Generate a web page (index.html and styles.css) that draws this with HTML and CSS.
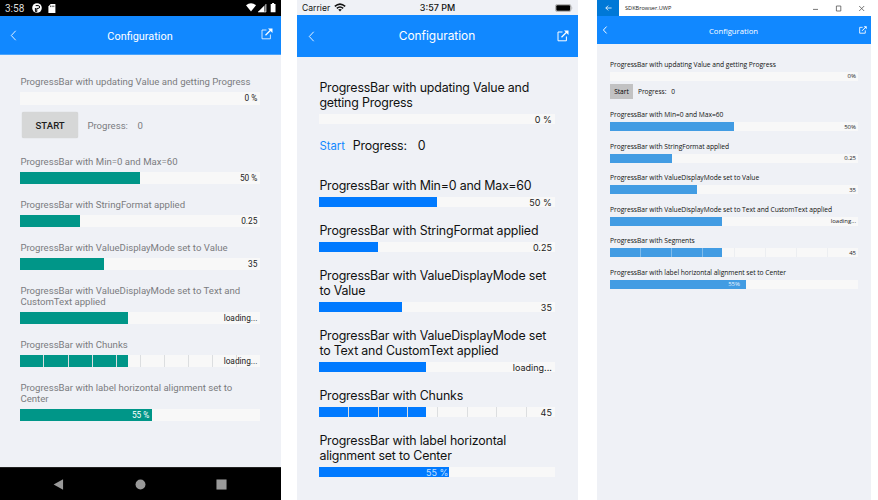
FILE: index.html
```html
<!DOCTYPE html>
<html lang="en">
<head>
<meta charset="utf-8">
<title>Configuration</title>
<link rel="stylesheet" href="styles.css">
</head>
<body>
<main class="stage">
<section class="phone android">
  <div class="status">
    <span class="clock">3:58</span>
    <svg class="app-icon" viewBox="0 0 10 10"><circle cx="5" cy="5" r="4.8" fill="#fff"/><path d="M3.7 2.6h2.5a1.3 1.3 0 0 1 0 2.8H4.8V8.6H3.4V5" fill="none" stroke="#000" stroke-width="1"/></svg>
    <svg class="sd-icon" viewBox="0 0 8 9"><path d="M2.6 0H7.4V9H.4V2.4z" fill="#fff"/><path d="M2.6 1.6v1.5M4.2 1.6v1.5M5.8 1.6v1.5" stroke="#000" stroke-width=".7"/></svg>
    <svg class="signal" viewBox="0 0 31 10"><path d="M0 2.2Q5-1.6 10 2.2L5 8.6z" fill="#fff"/><path d="M12 9L20 1V9z" fill="#777"/><path d="M12 9L18 3V9z" fill="#fff"/><path d="M20 1V9H12" fill="none" stroke="#fff" stroke-width=".6"/><path d="M24.7 1h1.4V0h2v1h1.4v8.3h-4.8z" fill="#fff"/></svg>
  </div>
  <header class="bar-top">
    <svg class="back" viewBox="0 0 6 10"><path d="M5 .7L1 5l4 4.3" fill="none" stroke="#fff" stroke-width=".8"/></svg>
    <h1>Configuration</h1>
    <svg class="open" viewBox="0 0 12 12"><path d="M5.5 2H1v8.8h8.4V6.5" fill="none" stroke="#fff" stroke-width=".8"/><path d="M4.5 7.3L10 1.8" stroke="#fff" stroke-width="1.3"/><path d="M7 .5h4.5V5z" fill="#fff"/></svg>
  </header>
  <div class="content">
    <div class="item"><p>ProgressBar with updating Value and getting Progress</p><div class="track"><span class="value">0 %</span></div></div>
    <div class="controls"><button>START</button><span class="plabel">Progress:</span><span>0</span></div>
    <div class="item"><p>ProgressBar with Min=0 and Max=60</p><div class="track"><div class="fill" style="width:50%"></div><span class="value">50 %</span></div></div>
    <div class="item"><p>ProgressBar with StringFormat applied</p><div class="track"><div class="fill" style="width:25%"></div><span class="value">0.25</span></div></div>
    <div class="item"><p>ProgressBar with ValueDisplayMode set to Value</p><div class="track"><div class="fill" style="width:35%"></div><span class="value">35</span></div></div>
    <div class="item"><p>ProgressBar with ValueDisplayMode set to Text and<br>CustomText applied</p><div class="track"><div class="fill" style="width:45%"></div><span class="value">loading...</span></div></div>
    <div class="item"><p>ProgressBar with Chunks</p><div class="track"><div class="fill" style="width:45%"></div><div class="chunks"><i></i><i></i><i></i><i></i><i></i><i></i><i></i><i></i><i></i><i></i></div><span class="value">loading...</span></div></div>
    <div class="item"><p>ProgressBar with label horizontal alignment set to<br>Center</p><div class="track"><div class="fill" style="width:55%"></div><span class="value mid">55 %</span></div></div>
  </div>
  <footer class="nav">
    <svg viewBox="0 0 12 12"><path d="M11 .3v11.4L.7 6z" fill="#999"/></svg>
    <svg viewBox="0 0 12 12"><circle cx="6" cy="6" r="5.4" fill="#999"/></svg>
    <svg viewBox="0 0 12 12"><path d="M.5.5h11v11H.5z" fill="#999"/></svg>
  </footer>
</section>

<section class="phone ios">
  <div class="status">
    <span class="carrier">Carrier</span>
    <svg class="wifi" viewBox="0 0 12 9"><path d="M.8 3.4Q6-1.2 11.2 3.4M2.8 5.4Q6 2.6 9.2 5.4" fill="none" stroke="#111" stroke-width="1.5"/><path d="M4.2 6.6Q6 5.3 7.8 6.6L6 8.6z" fill="#111"/></svg>
    <span class="clock">3:57 PM</span>
    <svg class="battery" viewBox="0 0 18 8"><rect x=".4" y=".4" width="15.6" height="7.2" rx="2" fill="#ddd" stroke="#999" stroke-width=".7"/><rect x="1.3" y="1.3" width="13.8" height="5.4" rx="1" fill="#000"/><path d="M16.8 2.7q1 1.3 0 2.6z" fill="#999"/></svg>
  </div>
  <header class="bar-top">
    <svg class="back" viewBox="0 0 6 10"><path d="M5 .7L1 5l4 4.3" fill="none" stroke="#fff" stroke-width=".8"/></svg>
    <h1>Configuration</h1>
    <svg class="open" viewBox="0 0 12 12"><path d="M5.5 2H1v8.8h8.4V6.5" fill="none" stroke="#fff"/><path d="M4.5 7.3L10 1.8" stroke="#fff" stroke-width="1.3"/><path d="M7 .5h4.5V5z" fill="#fff"/></svg>
  </header>
  <div class="content">
    <div class="item"><p>ProgressBar with updating Value and<br>getting Progress</p><div class="track"><span class="value">0 %</span></div></div>
    <div class="controls"><button>Start</button><span class="plabel">Progress:</span><span>0</span></div>
    <div class="item"><p>ProgressBar with Min=0 and Max=60</p><div class="track"><div class="fill" style="width:50%"></div><span class="value">50 %</span></div></div>
    <div class="item"><p>ProgressBar with StringFormat applied</p><div class="track"><div class="fill" style="width:25%"></div><span class="value">0.25</span></div></div>
    <div class="item"><p>ProgressBar with ValueDisplayMode set<br>to Value</p><div class="track"><div class="fill" style="width:35%"></div><span class="value">35</span></div></div>
    <div class="item"><p>ProgressBar with ValueDisplayMode set<br>to Text and CustomText applied</p><div class="track"><div class="fill" style="width:45%"></div><span class="value">loading...</span></div></div>
    <div class="item"><p>ProgressBar with Chunks</p><div class="track"><div class="fill" style="width:45%"></div><div class="chunks"><i></i><i></i><i></i><i></i><i></i><i></i><i></i><i></i></div><span class="value">45</span></div></div>
    <div class="item"><p>ProgressBar with label horizontal<br>alignment set to Center</p><div class="track"><div class="fill" style="width:55%"></div><span class="value mid">55 %</span></div></div>
  </div>
</section>

<section class="phone uwp">
  <div class="status">
    <div class="winback"><svg viewBox="0 0 7 6"><path d="M6.6 3H.8M3.2.6L.8 3l2.4 2.4" fill="none" stroke="#fff" stroke-width=".8"/></svg></div>
    <span class="wintitle">SDKBrowser.UWP</span>
    <svg class="winbtns" viewBox="0 0 52 7"><path d="M0 4.4h5" stroke="#555" stroke-width=".8"/><path d="M23.4 1h4.4v5h-4.4zM46.2 1l5 5M51.2 1l-5 5" fill="none" stroke="#555" stroke-width=".8"/></svg>
  </div>
  <header class="bar-top">
    <svg class="back" viewBox="0 0 6 10"><path d="M5 .7L1 5l4 4.3" fill="none" stroke="#fff" stroke-width="1.2"/></svg>
    <h1>Configuration</h1>
    <svg class="open" viewBox="0 0 12 12"><path d="M5.5 2H1v8.8h8.4V6.5" fill="none" stroke="#fff" stroke-width="1.3"/><path d="M4.5 7.3L10 1.8" stroke="#fff" stroke-width="1.5"/><path d="M7 .5h4.5V5z" fill="#fff"/></svg>
  </header>
  <div class="content">
    <div class="item"><p>ProgressBar with updating Value and getting Progress</p><div class="track"><span class="value">0%</span></div></div>
    <div class="controls"><button>Start</button><span class="plabel">Progress:</span><span>0</span></div>
    <div class="item"><p>ProgressBar with Min=0 and Max=60</p><div class="track"><div class="fill" style="width:50%"></div><span class="value">50%</span></div></div>
    <div class="item"><p>ProgressBar with StringFormat applied</p><div class="track"><div class="fill" style="width:25%"></div><span class="value">0.25</span></div></div>
    <div class="item"><p>ProgressBar with ValueDisplayMode set to Value</p><div class="track"><div class="fill" style="width:35%"></div><span class="value">35</span></div></div>
    <div class="item"><p>ProgressBar with ValueDisplayMode set to Text and CustomText applied</p><div class="track"><div class="fill" style="width:45%"></div><span class="value">loading...</span></div></div>
    <div class="item"><p>ProgressBar with Segments</p><div class="track"><div class="fill" style="width:45%"></div><div class="chunks"><i></i><i></i><i></i><i></i><i></i><i></i><i></i><i></i></div><span class="value">45</span></div></div>
    <div class="item"><p>ProgressBar with label horizontal alignment set to Center</p><div class="track"><div class="fill" style="width:55%"></div><span class="value mid">55%</span></div></div>
  </div>
</section>
</main>
</body>
</html>
```
FILE: styles.css
```css
* { box-sizing: border-box; margin: 0; padding: 0; }
body { background: #fff; width: 878px; height: 500px; overflow: hidden; }
svg { display: block; flex: none; }
.stage { display: flex; height: 500px; }
.phone { display: flex; flex-direction: column; background: #eff1f6; height: 500px; flex: none; overflow: hidden; white-space: nowrap; }
.status, .bar-top, .controls { display: flex; align-items: center; flex: none; }
.bar-top { background: #1188ff; color: #fff; }
.bar-top h1 { flex: 1; text-align: center; font-weight: 400; }
.content { display: flex; flex-direction: column; flex: 1; }
.track { position: relative; background: #f8f8f8; }
.fill { height: 100%; }
.value { position: absolute; top: 0; bottom: 0; right: 3px; display: flex; align-items: center; color: #222; }
.value.mid { color: #fff; }
.chunks { position: absolute; inset: 0; display: flex; }
.chunks i { flex: 1; border-right: 1px solid #dcdee0; }
.chunks i:last-child { border: 0; }
button { border: 0; font: inherit; }

/* Android */
.android { width: 281px; font-family: Roboto, sans-serif; }
.android .status { height: 16px; background: #000; color: #ddd; padding: 1px 5px 0; font-size: 10px; }
.android .clock { width: 27px; }
.android .app-icon { width: 10px; height: 10px; margin-top: -1px; }
.android .sd-icon { width: 8px; height: 9px; margin-left: 6px; margin-top: -1px; }
.android .signal { width: 31px; height: 10px; margin-left: auto; margin-right: -1px; margin-top: -1px; }
.android .bar-top { height: 39px; padding: 0 8px 0 10px; border-bottom: 1px solid #4aa4fc; }
.android .back { width: 7px; height: 11px; }
.android .open { width: 12px; height: 12px; margin-top: -3px; }
.android h1 { font-size: 10.9px; padding: 2px 0 0 2px; }
.android .content { padding: 21px 20.5px 0 20.4px; }
.android .item { margin-bottom: 14.5px; }
.android p { font-size: 9.6px; line-height: 11px; color: #7b7c7f; margin-bottom: 5px; }
.android .track { height: 12.5px; width: 240px; }
.android .fill { background: #009688; }
.android .value { font-size: 8.3px; }
.android .mid { right: 111px; }
.android .controls { height: 26px; margin: -7px 0 17.5px 2px; font-size: 9.6px; color: #7b7c7f; }
.android button { width: 55.5px; height: 26px; background: #d6d7d7; color: #1e1e1e; font-weight: 500; border-radius: 2px; box-shadow: 0 0 1px #bbb; }
.android .plabel { margin: 0 9.5px 0 9.5px; }
.android .nav { height: 33px; background: #000; border-top: 1px solid #222; display: flex; align-items: center; justify-content: space-between; padding: 0 54px 0 53px; }
.android .nav svg { width: 11px; height: 11px; }

/* iOS */
.ios { width: 281px; margin-left: 16px; font-family: Inter, sans-serif; }
.ios .status { height: 15px; padding: 0 5px; background: #eff1f6; color: #111; font-size: 9px; position: relative; }
.ios .carrier { font-size: 8.6px; }
.ios .wifi { width: 12px; height: 9px; margin-left: 3.5px; }
.ios .clock { position: absolute; left: 0; right: 0; text-align: center; font-weight: 500; }
.ios .battery { width: 18px; height: 8px; margin-left: auto; }
.ios .bar-top { height: 42px; padding: 0 9px 0 11px; }
.ios .back { width: 7px; height: 11px; }
.ios .open { width: 12px; height: 12px; margin-top: -1px; }
.ios h1 { font-size: 11.9px; padding: 0 0 2px 2px; }
.ios .content { padding: 22.5px 22.5px 0 22.4px; }
.ios .item { margin-bottom: 15.5px; }
.ios p { font-size: 12.4px; letter-spacing: -.18px; line-height: 15px; color: #111; margin-bottom: 4.5px; }
.ios .track { height: 10px; width: 236px; }
.ios .fill { background: #007aff; }
.ios .value { font-size: 9px; right: 3.5px; }
.ios .mid { right: 107px; color: #c6e0ff; }
.ios .controls { height: 20px; margin: -4px 0 22px; font-size: 12.4px; letter-spacing: -.2px; color: #111; }
.ios button { background: none; color: #1188ff; font-size: 11.3px; }
.ios .plabel { margin: 0 11px 0 8px; }

/* UWP */
.uwp { width: 274px; margin-left: 19px; font-family: "Open Sans", sans-serif; }
.uwp .status { height: 16px; background: #fff; color: #222; font-size: 5.6px; }
.winback { width: 22px; height: 16px; background: #0078d7; display: flex; align-items: center; justify-content: center; }
.winback svg { width: 7px; height: 6px; }
.wintitle { margin-left: 6px; }
.winbtns { width: 52px; height: 7px; margin-left: auto; margin-right: 6px; }
.uwp .bar-top { height: 28px; padding: 0 4px 0 5px; }
.uwp .back { width: 6px; height: 8px; }
.uwp .open { width: 8px; height: 8px; }
.uwp h1 { font-size: 7.7px; padding-top: 1px; }
.uwp .content { padding: 15.5px 13px 0; }
.uwp .item { margin-bottom: 10.5px; }
.uwp p { font-size: 6.7px; letter-spacing: -.035px; line-height: 9px; color: #111; margin-bottom: 3px; }
.uwp .track { height: 9px; }
.uwp .fill { background: #429ce3; }
.uwp .chunks i { border-color: #eceef1; }
.uwp .chunks i:nth-child(-n+3) { border-color: #7fbcec; }
.uwp .value { font-size: 6px; right: 2px; }
.uwp .mid { right: 118px; color: #e5f2ff; }
.uwp .controls { height: 15px; margin: -7px 0 11px; font-size: 6.6px; color: #111; letter-spacing: -.03px; }
.uwp button { width: 23px; height: 15px; background: #c2c2c3; }
.uwp .plabel { margin: 0 5px; }
```
